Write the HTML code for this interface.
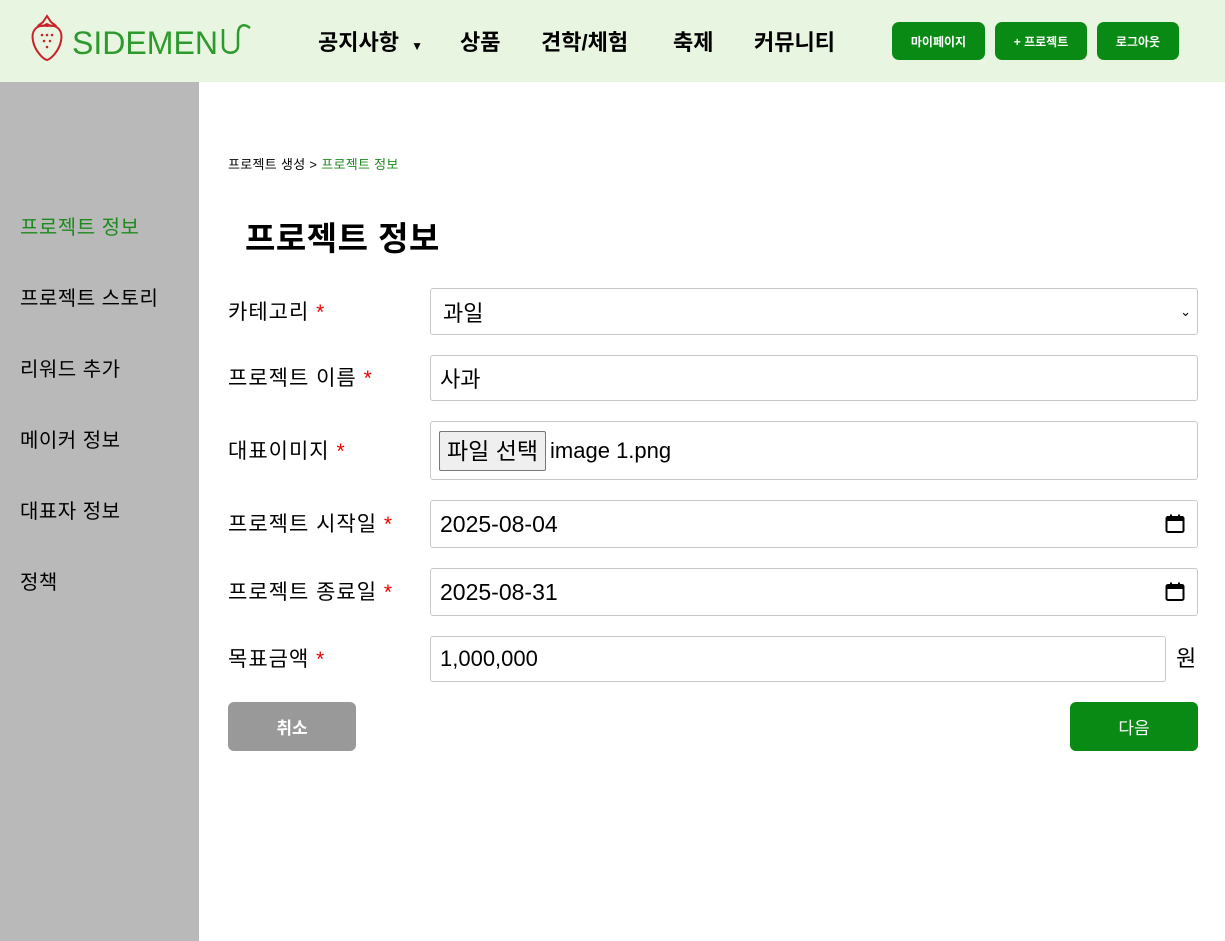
<!DOCTYPE html>
<html><head><meta charset="utf-8"><style>
*{box-sizing:border-box;margin:0;padding:0}
body{width:1225px;height:941px;position:relative;overflow:hidden;background:#fff;font-family:"Liberation Sans","Noto Sans CJK KR",sans-serif;color:#000}
.hdr{position:absolute;left:0;top:0;width:1225px;height:82px;background:#e8f5e0}
.logo{position:absolute;left:30px;top:14px}
.nav{position:absolute;top:29px;font-size:22px;font-weight:bold;line-height:28px}
.hb{position:absolute;top:22px;height:38px;background:#098a14;color:#fff;border-radius:7px;font-size:12px;font-weight:bold;display:flex;align-items:center;justify-content:center}
.side{position:absolute;left:0;top:82px;width:199px;height:859px;background:#b9b9b9}
.si{position:absolute;left:20px;font-size:20px;line-height:26px;letter-spacing:0.5px}
.lbl{position:absolute;left:228px;font-size:21px;line-height:26px;letter-spacing:1px}
.lbl b{color:#e00;font-weight:normal}
.in{position:absolute;left:430px;width:768px;border:1px solid #c8c8c8;border-radius:3px;background:#fff;font-size:22px;display:flex;align-items:center;padding-left:9px}
.cal{position:absolute;right:12px;top:13px}
</style></head><body>
<div class="hdr">
<svg class="logo" width="225" height="48" viewBox="0 0 225 48">
<path d="M9 11 L13 8 L17 2 L21 8 L25 11 L21 12 L17 10 L13 12Z" fill="none" stroke="#c8232a" stroke-width="2"/>
<path d="M17 12 C6 10 1 17 3 27 C5 37 13 45 17 46 C21 45 29 37 31 27 C33 17 28 10 17 12Z" fill="none" stroke="#c8232a" stroke-width="2"/>
<g fill="#c8232a"><circle cx="12" cy="21" r="1.3"/><circle cx="17" cy="21" r="1.3"/><circle cx="22" cy="21" r="1.3"/><circle cx="14" cy="27" r="1.3"/><circle cx="20" cy="27" r="1.3"/><circle cx="17" cy="33" r="1.3"/></g>
<text x="42" y="40" font-family="Liberation Sans,sans-serif" font-size="32" fill="#2d9a2d" textLength="146" lengthAdjust="spacingAndGlyphs">SIDEMEN</text>
<path d="M193 15 L193 32 C193 41 208 41 208 32 L208 20 C208 11 214 9 220 14" fill="none" stroke="#2d9a2d" stroke-width="2.5"/>
</svg>
<div class="nav" style="left:318px">공지사항 <span style="font-size:12px;margin-left:6px">▼</span></div>
<div class="nav" style="left:460px">상품</div>
<div class="nav" style="left:541px">견학/체험</div>
<div class="nav" style="left:673px">축제</div>
<div class="nav" style="left:754px">커뮤니티</div>
<div class="hb" style="left:892px;width:93px">마이페이지</div>
<div class="hb" style="left:995px;width:92px">+ 프로젝트</div>
<div class="hb" style="left:1097px;width:82px">로그아웃</div>
</div>
<div class="side">
<div class="si" style="top:133px;color:#1e8a1e">프로젝트 정보</div>
<div class="si" style="top:204px">프로젝트 스토리</div>
<div class="si" style="top:275px">리워드 추가</div>
<div class="si" style="top:346px">메이커 정보</div>
<div class="si" style="top:417px">대표자 정보</div>
<div class="si" style="top:488px">정책</div>
</div>
<div style="position:absolute;left:228px;top:154px;font-size:13px;letter-spacing:0.3px">프로젝트 생성 &gt; <span style="color:#1e8a1e">프로젝트 정보</span></div>
<div style="position:absolute;left:245px;top:212px;font-size:33px;font-weight:bold;letter-spacing:0.5px">프로젝트 정보</div>

<div class="lbl" style="top:300px">카테고리 <b>*</b></div>
<div class="in" style="top:288px;height:47px;padding-left:12px">과일<span style="position:absolute;right:6px;font-size:13px">&#8964;</span></div>
<div class="lbl" style="top:366px">프로젝트 이름 <b>*</b></div>
<div class="in" style="top:355px;height:46px">사과</div>
<div class="lbl" style="top:439px">대표이미지 <b>*</b></div>
<div class="in" style="top:421px;height:59px;padding-left:8px"><span style="display:inline-block;border:1px solid #777;border-radius:2px;background:#efefef;padding:4px 7px;font-size:23px;line-height:30px">파일 선택</span><span style="margin-left:4px">image 1.png</span></div>
<div class="lbl" style="top:512px">프로젝트 시작일 <b>*</b></div>
<div class="in" style="top:500px;height:48px;font-size:23px">2025-08-04<svg class="cal" width="20" height="20" viewBox="0 0 20 20"><rect x="1.5" y="3" width="17" height="15" rx="1.5" fill="none" stroke="#000" stroke-width="2"/><rect x="1.5" y="3" width="17" height="4" fill="#000"/><rect x="5" y="0.5" width="2" height="4" fill="#000"/><rect x="13" y="0.5" width="2" height="4" fill="#000"/></svg></div>
<div class="lbl" style="top:580px">프로젝트 종료일 <b>*</b></div>
<div class="in" style="top:568px;height:48px;font-size:23px">2025-08-31<svg class="cal" width="20" height="20" viewBox="0 0 20 20"><rect x="1.5" y="3" width="17" height="15" rx="1.5" fill="none" stroke="#000" stroke-width="2"/><rect x="1.5" y="3" width="17" height="4" fill="#000"/><rect x="5" y="0.5" width="2" height="4" fill="#000"/><rect x="13" y="0.5" width="2" height="4" fill="#000"/></svg></div>
<div class="lbl" style="top:647px">목표금액 <b>*</b></div>
<div class="in" style="top:636px;height:46px;width:736px">1,000,000</div>
<div style="position:absolute;left:1176px;top:646px;font-size:22px;line-height:26px">원</div>
<div style="position:absolute;left:228px;top:702px;width:128px;height:49px;background:#999;border-radius:6px;color:#fff;font-size:17px;font-weight:bold;display:flex;align-items:center;justify-content:center">취소</div>
<div style="position:absolute;left:1070px;top:702px;width:128px;height:49px;background:#098a14;border-radius:6px;color:#fff;font-size:17px;display:flex;align-items:center;justify-content:center">다음</div>
</body></html>
